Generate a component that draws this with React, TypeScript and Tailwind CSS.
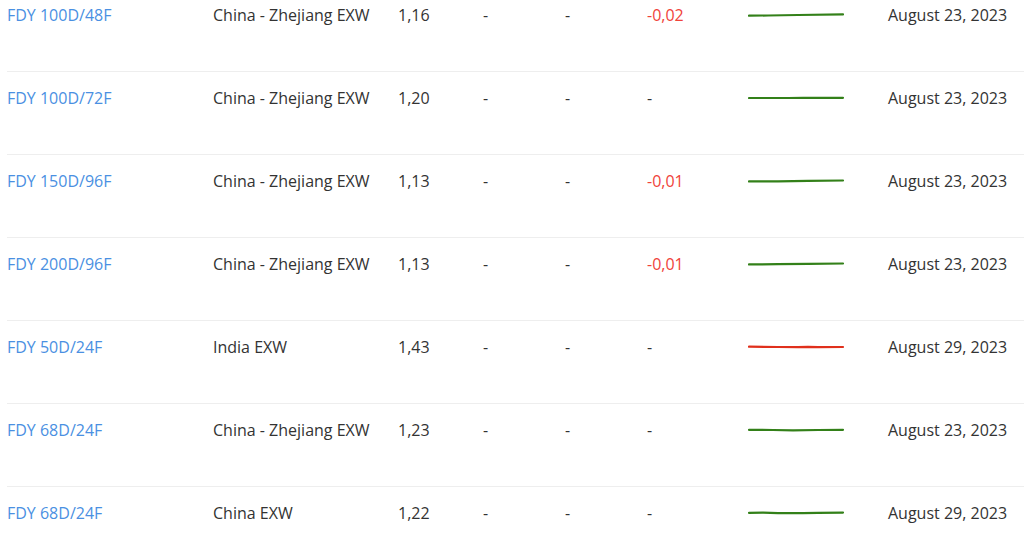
import React from "react"

type Row = {
  name: string
  origin: string
  price: string
  w: string
  m: string
  change: string
  trend: "up" | "down"
  line: string
  date: string
}

const rows: Row[] = [
  { name: "FDY 100D/48F", origin: "China - Zhejiang EXW", price: "1,16", w: "-", m: "-", change: "-0,02", trend: "up", line: "M1 4.6 L20 4.5 L50 4.0 L95 3.4", date: "August 23, 2023" },
  { name: "FDY 100D/72F", origin: "China - Zhejiang EXW", price: "1,20", w: "-", m: "-", change: "-", trend: "up", line: "M1 4 L40 4 L55 3.9 L95 3.8", date: "August 23, 2023" },
  { name: "FDY 150D/96F", origin: "China - Zhejiang EXW", price: "1,13", w: "-", m: "-", change: "-0,01", trend: "up", line: "M1 4.4 L30 4.3 L60 3.9 L95 3.5", date: "August 23, 2023" },
  { name: "FDY 200D/96F", origin: "China - Zhejiang EXW", price: "1,13", w: "-", m: "-", change: "-0,01", trend: "up", line: "M1 4.4 L30 4.2 L60 3.9 L95 3.5", date: "August 23, 2023" },
  { name: "FDY 50D/24F", origin: "India EXW", price: "1,43", w: "-", m: "-", change: "-", trend: "down", line: "M1 3.6 L30 4 L50 4.1 L60 3.8 L70 4.1 L95 4", date: "August 29, 2023" },
  { name: "FDY 68D/24F", origin: "China - Zhejiang EXW", price: "1,23", w: "-", m: "-", change: "-", trend: "up", line: "M1 3.8 L25 4 L45 4.4 L70 4 L95 3.8", date: "August 23, 2023" },
  { name: "FDY 68D/24F", origin: "China EXW", price: "1,22", w: "-", m: "-", change: "-", trend: "up", line: "M1 3.8 L15 3.6 L30 4.2 L55 4.2 L70 3.8 L95 3.6", date: "August 29, 2023" },
]

function Sparkline({ d, trend }: { d: string; trend: "up" | "down" }) {
  return (
    <svg width="97" height="8" viewBox="0 0 97 8" className="block">
      <path
        d={d}
        fill="none"
        stroke={trend === "up" ? "#338019" : "#e0301c"}
        strokeWidth="2.2"
        strokeLinecap="round"
        strokeLinejoin="round"
      />
    </svg>
  )
}

export default function App() {
  return (
    <div className="h-[538px] w-[1024px] overflow-hidden bg-white font-['Open_Sans',sans-serif] text-[16px] text-[#333333]">
      <div className="-mt-[11px] ml-[7px]">
        {rows.map((row, i) => (
          <div
            key={i}
            className="grid h-[83px] grid-cols-[206px_185px_85px_82px_82px_101px_140px_1fr] border-b border-[#eeeeee] pt-[15px]"
          >
            <span className="h-[22px] leading-[22px] text-[#4a90e2]">{row.name}</span>
            <span className="leading-[22px] whitespace-nowrap">{row.origin}</span>
            <span className="leading-[22px]">{row.price}</span>
            <span className="leading-[22px]">{row.w}</span>
            <span className="leading-[22px]">{row.m}</span>
            <span className={`leading-[22px] ${row.change !== "-" ? "text-[#f0433a]" : ""}`}>{row.change}</span>
            <div className="flex h-[22px] items-center">
              <Sparkline d={row.line} trend={row.trend} />
            </div>
            <span className="leading-[22px] whitespace-nowrap">{row.date}</span>
          </div>
        ))}
      </div>
    </div>
  )
}
